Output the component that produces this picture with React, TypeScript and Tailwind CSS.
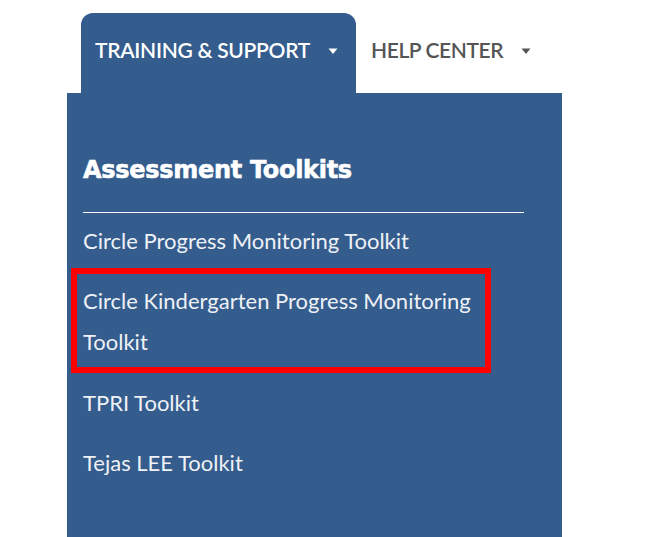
const links = [
    'Circle Progress Monitoring Toolkit',
    'Circle Kindergarten Progress Monitoring Toolkit',
    'TPRI Toolkit',
    'Tejas LEE Toolkit',
];

function Caret({ className }: { className: string }) {
    return (
        <svg width="10" height="7" viewBox="0 0 10 7" className={className}>
            <path d="M0.5 0.5 L9.5 0.5 L5 6 Z" fill="currentColor" />
        </svg>
    );
}

export default function App() {
    return (
        <div className="w-[654px] h-[537px] bg-white overflow-hidden" style={{ fontFamily: 'Lato, "Open Sans", sans-serif' }}>
            <div className="flex pl-[81px] pt-[13px] h-[93px]">
                <div className="w-[275px] h-[80px] bg-[#345c8d] rounded-t-[12px] flex items-center pl-[14px] pb-[6px] text-white">
                    <span className="text-[21px] font-semibold tracking-[-0.3px]">TRAINING &amp; SUPPORT</span>
                    <Caret className="ml-[18px] mt-[2px]" />
                </div>
                <div className="h-[80px] flex items-center pl-[15px] pb-[6px] text-[#555555]">
                    <span className="text-[21px] font-semibold tracking-[-0.4px]">HELP CENTER</span>
                    <Caret className="ml-[18px] mt-[2px]" />
                </div>
            </div>
            <div className="ml-[67px] w-[495px] h-[444px] bg-[#345c8d] pt-[58px] pl-[16px]">
                <h2
                    className="text-[24px] font-bold text-white leading-[38px] tracking-[-0.3px] [-webkit-text-stroke:0.6px_white]"
                    style={{ fontFamily: '"DejaVu Sans", sans-serif' }}
                >
                    Assessment Toolkits
                </h2>
                <div className="w-[441px] h-px bg-white mt-[23px]" />
                <ul className="text-[#eef1f5] text-[22px] leading-[41px]">
                    <li className="mt-[7px]">{links[0]}</li>
                    <li className="mt-[7px] -ml-[12px] w-[420px] border-[6px] border-[#ff0000] pl-[6px] pt-[6px] pb-[5px]">
                        {links[1]}
                    </li>
                    <li className="mt-[9px]">{links[2]}</li>
                    <li className="mt-[19px]">{links[3]}</li>
                </ul>
            </div>
        </div>
    );
}
